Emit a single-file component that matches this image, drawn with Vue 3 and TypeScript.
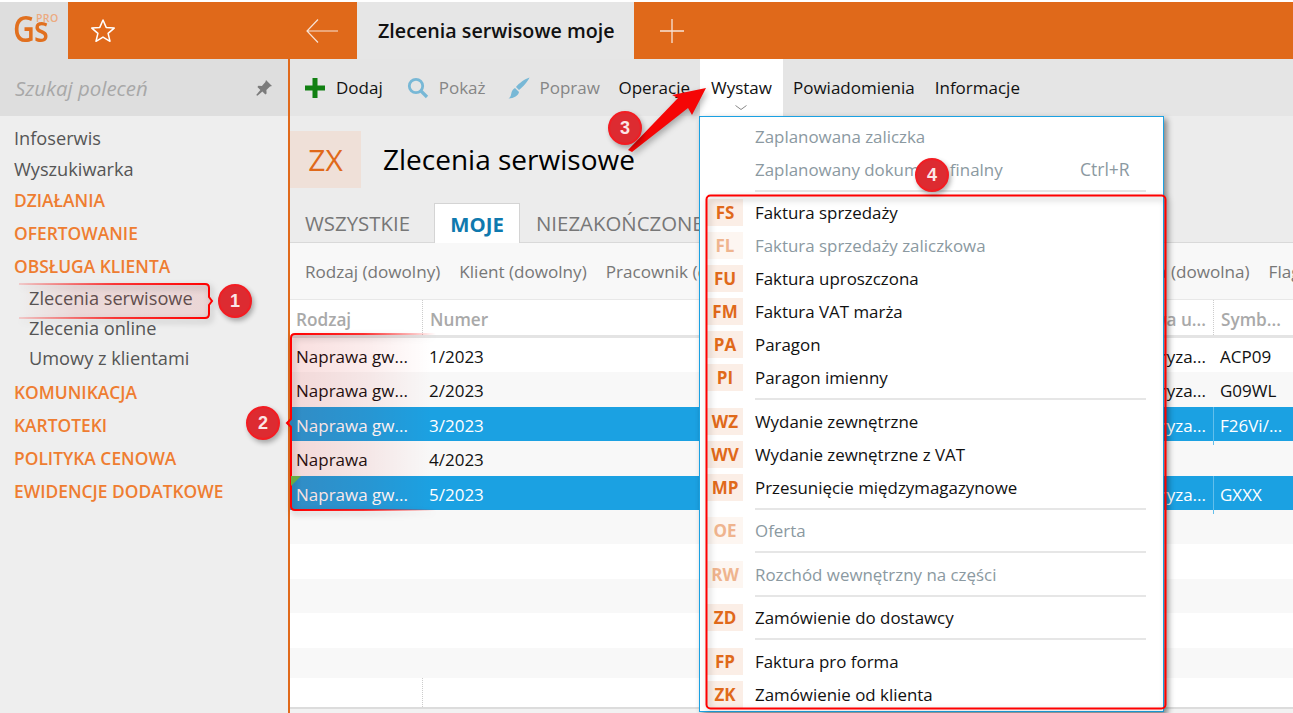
<script setup lang="ts">
interface Tool { label: string; icon?: string; muted?: boolean; active?: boolean }
interface Nav { label: string; kind: 'plain' | 'group' | 'sub'; gap?: boolean }
interface MenuRow { sep?: boolean; code?: string; label?: string; off?: boolean; key?: string }
interface Row { type?: string; num?: string; name?: string; sym?: string; sel?: boolean; cls?: string }

const tools: Tool[] = [
  { label: 'Dodaj', icon: 'plus' },
  { label: 'Pokaż', icon: 'lens', muted: true },
  { label: 'Popraw', icon: 'brush', muted: true },
  { label: 'Operacje' },
  { label: 'Wystaw', active: true },
  { label: 'Powiadomienia' },
  { label: 'Informacje' }
]
const nav: Nav[] = [
  { label: 'Infoserwis', kind: 'plain' },
  { label: 'Wyszukiwarka', kind: 'plain' },
  { label: 'DZIAŁANIA', kind: 'group' },
  { label: 'OFERTOWANIE', kind: 'group' },
  { label: 'OBSŁUGA KLIENTA', kind: 'group' },
  { label: 'Zlecenia serwisowe', kind: 'sub' },
  { label: 'Zlecenia online', kind: 'sub' },
  { label: 'Umowy z klientami', kind: 'sub' },
  { label: 'KOMUNIKACJA', kind: 'group', gap: true },
  { label: 'KARTOTEKI', kind: 'group' },
  { label: 'POLITYKA CENOWA', kind: 'group' },
  { label: 'EWIDENCJE DODATKOWE', kind: 'group' }
]
const menu: MenuRow[] = [
  { label: 'Zaplanowana zaliczka', off: true },
  { label: 'Zaplanowany dokument finalny', off: true, key: 'Ctrl+R' },
  { sep: true },
  { code: 'FS', label: 'Faktura sprzedaży' },
  { code: 'FL', label: 'Faktura sprzedaży zaliczkowa', off: true },
  { code: 'FU', label: 'Faktura uproszczona' },
  { code: 'FM', label: 'Faktura VAT marża' },
  { code: 'PA', label: 'Paragon' },
  { code: 'PI', label: 'Paragon imienny' },
  { sep: true },
  { code: 'WZ', label: 'Wydanie zewnętrzne' },
  { code: 'WV', label: 'Wydanie zewnętrzne z VAT' },
  { code: 'MP', label: 'Przesunięcie międzymagazynowe' },
  { sep: true },
  { code: 'OE', label: 'Oferta', off: true },
  { sep: true },
  { code: 'RW', label: 'Rozchód wewnętrzny na części', off: true },
  { sep: true },
  { code: 'ZD', label: 'Zamówienie do dostawcy' },
  { sep: true },
  { code: 'FP', label: 'Faktura pro forma' },
  { code: 'ZK', label: 'Zamówienie od klienta' }
]
const rows: Row[] = [
  { type: 'Naprawa gw...', num: '1/2023', name: 'Autoryza...', sym: 'ACP09' },
  { type: 'Naprawa gw...', num: '2/2023', name: 'Autoryza...', sym: 'G09WL' },
  { type: 'Naprawa gw...', num: '3/2023', name: 'Autoryza...', sym: 'F26Vi/...', sel: true },
  { type: 'Naprawa', num: '4/2023' },
  { type: 'Naprawa gw...', num: '5/2023', name: 'Autoryza...', sym: 'GXXX', sel: true },
  {}, {}, {}, {},
  { cls: 'r10' },
  { cls: 'r11' }
]
const badges = [
  { n: 1, x: 235, y: 301 },
  { n: 2, x: 263, y: 423 },
  { n: 3, x: 625, y: 128 },
  { n: 4, x: 932, y: 175 }
]
</script>

<template>
  <div class="app">
    <header class="topbar">
      <div class="logo"><span class="gs">Gs</span><span class="pro">PRO</span></div>
      <div class="orange fav">
        <svg width="26" height="26" viewBox="0 0 26 26" class="star"><path d="M13 2l3.2 7.4 8 .7-6.1 5.3 1.9 7.9L13 19.1 6 23.3l1.9-7.9L1.8 10.100l8-.7z" fill="none" stroke="#fff" stroke-width="1.500" stroke-linejoin="round"/></svg>
        <svg width="32" height="26" viewBox="0 0 32 26" class="back"><path d="M32 13H1M12 1.500L1 13l11 11.500" fill="none" stroke="#f7e3d6" stroke-width="1.200"/></svg>
      </div>
      <div class="tab-title">Zlecenia serwisowe moje</div>
      <div class="orange add">
        <svg width="24" height="24" viewBox="0 0 24 24"><path d="M12 0v24M0 12h24" stroke="#f7e3d6" stroke-width="1.300"/></svg>
      </div>
    </header>

    <div class="body">
      <aside class="side">
        <div class="search">
          <span>Szukaj poleceń</span>
          <svg width="18" height="18" viewBox="0 0 18 18"><path d="M11 1l6 6-2 .6-3.600 3.400.2 3.500-1.200 1-3-3-5 4.200L1.200 16l4.200-5-3-3 1-1.200 3.500.2L10.400 3z" fill="#7b7b7b"/></svg>
        </div>
        <nav class="nav">
          <div v-for="n in nav" :key="n.label" :class="[n.kind, { gap: n.gap }]">{{ n.label }}</div>
        </nav>
      </aside>

      <main class="main">
        <div class="toolbar">
          <div v-for="t in tools" :key="t.label" class="tool" :class="[t.icon, { muted: t.muted, active: t.active }]">
            <svg v-if="t.icon === 'plus'" width="22" height="22" viewBox="0 0 22 22"><path d="M8.500 1h5v7.500H21v5h-7.500V21h-5v-7.500H1v-5h7.500z" fill="#118012"/></svg>
            <svg v-if="t.icon === 'lens'" width="22" height="22" viewBox="0 0 22 22"><circle cx="9" cy="9" r="6.700" fill="none" stroke="#78b8d6" stroke-width="2.800"/><path d="M13.500 13.500L20 20" stroke="#78b8d6" stroke-width="3.200"/></svg>
            <svg v-if="t.icon === 'brush'" width="22" height="22" viewBox="0 0 22 22"><path d="M21.500.500C20 4 15 10 11 13L8 10C11 6 17 2 21.500.500zM7 11l4 4c-.5 3.500-5 6.500-10.500 6.500 2.500-1.500 2.500-4 3-6 .5-2 2-4 3.500-4.500z" fill="#78b8d6"/></svg>
            <span>{{ t.label }}</span>
            <svg v-if="t.active" class="chev" width="12" height="6" viewBox="0 0 12 6"><path d="M.5.500L6 4.500 11.500.500" fill="none" stroke="#888" stroke-width="1"/></svg>
          </div>
        </div>

        <div class="title-row">
          <div class="zx">ZX</div>
          <h1>Zlecenia serwisowe</h1>
        </div>

        <div class="tabs">
          <span class="tab">WSZYSTKIE</span>
          <span class="tab current">MOJE</span>
          <span class="tab">NIEZAKOŃCZONE</span>
        </div>

        <div class="filters">
          <span>Rodzaj (dowolny)</span>
          <span>Klient (dowolny)</span>
          <span>Pracownik (dowolny)</span>
          <span class="f-spacer"></span>
          <span class="f-state">Marka (dowolna)</span>
          <span>Flaga</span>
        </div>

        <div class="thead">
          <div class="c1">Rodzaj</div>
          <div class="c2">Numer</div>
          <div class="c3">Nazwa u...</div>
          <div class="c4">Symb...</div>
        </div>
        <div class="tbody">
          <div v-for="(r, i) in rows" :key="i" class="row" :class="[r.cls, { sel: r.sel, even: i % 2 === 1 }]">
            <div class="c1">{{ r.type }}</div>
            <div class="c2">{{ r.num }}</div>
            <div class="c3">{{ r.name }}</div>
            <div class="c4">{{ r.sym }}</div>
          </div>
        </div>
        <div class="tfoot"></div>
      </main>
    </div>

    <div class="menu">
      <template v-for="(m, i) in menu" :key="i">
        <div v-if="m.sep" class="sep"></div>
        <div v-else class="item" :class="{ off: m.off }">
          <span class="code" :class="{ blank: !m.code }">{{ m.code }}</span>
          <span class="lbl">{{ m.label }}</span>
          <span v-if="m.key" class="key">{{ m.key }}</span>
        </div>
      </template>
    </div>

    <svg class="marks" width="1293" height="713" viewBox="0 0 1293 713">
      <defs>
        <linearGradient id="f1" gradientUnits="userSpaceOnUse" x1="19" y1="0" x2="209" y2="0">
          <stop offset="0" stop-color="#c00" stop-opacity="0"/>
          <stop offset=".3" stop-color="#c00" stop-opacity=".09"/>
          <stop offset="1" stop-color="#c00" stop-opacity=".1"/>
        </linearGradient>
        <linearGradient id="s1" gradientUnits="userSpaceOnUse" x1="19" y1="0" x2="209" y2="0">
          <stop offset="0" stop-color="#f00" stop-opacity=".15"/>
          <stop offset=".5" stop-color="#f00" stop-opacity=".75"/>
          <stop offset="1" stop-color="#f00"/>
        </linearGradient>
        <linearGradient id="f2" gradientUnits="userSpaceOnUse" x1="291" y1="0" x2="432" y2="0">
          <stop offset="0" stop-color="#c00" stop-opacity=".13"/>
          <stop offset=".55" stop-color="#c00" stop-opacity=".07"/>
          <stop offset="1" stop-color="#c00" stop-opacity="0"/>
        </linearGradient>
        <linearGradient id="s2" gradientUnits="userSpaceOnUse" x1="291" y1="0" x2="436" y2="0">
          <stop offset="0" stop-color="#f00"/>
          <stop offset=".5" stop-color="#f00" stop-opacity=".8"/>
          <stop offset="1" stop-color="#f00" stop-opacity="0"/>
        </linearGradient>
      </defs>
      <path d="M19 284H205q4 0 4 4v9l3 4-3 4v9q0 4-4 4H19" fill="url(#f1)"/>
      <path class="shade" d="M19 284H205q4 0 4 4v9l3 4-3 4v9q0 4-4 4H19" fill="none" stroke="url(#s1)" stroke-width="2"/>
      <path d="M436 334H295q-4 0-4 4v81l-4 4 4 4v79q0 4 4 4H436" fill="url(#f2)"/>
      <path class="shade" d="M436 334H295q-4 0-4 4v81l-4 4 4 4v79q0 4 4 4H436" fill="none" stroke="url(#s2)" stroke-width="2"/>
      <path d="M291 476h10l-10 10z" fill="#6bab43"/>
      <rect class="shade" x="706.500" y="195.500" width="459" height="513" rx="4" fill="none" stroke="#f00" stroke-width="2"/>
      <path class="shade" d="M628 150l50-52-6-3 34-7-14 27-4-7-56 44z" fill="#f50606"/>
    </svg>

    <div v-for="b in badges" :key="b.n" class="badge" :style="{ left: b.x - 17 + 'px', top: b.y - 17 + 'px' }">{{ b.n }}</div>
  </div>
</template>

<style>
html, body { margin: 0; overflow: hidden; background: #fff; }
</style>

<style scoped>
.app {
  position: relative;
  width: 1293px;
  height: 713px;
  padding-top: 2px;
  box-sizing: border-box;
  overflow: hidden;
  background: #fff;
  font-family: "Open Sans", "Noto Sans", sans-serif;
  font-size: 17px;
  color: #111;
}
.topbar { display: flex; height: 57px; }
.logo { position: relative; width: 68px; background: #dedede; color: #e1701f; }
.gs { position: absolute; left: 13px; top: 5px; font-size: 36px; font-weight: 600; line-height: 44px; letter-spacing: -1px; transform: scaleX(.84); transform-origin: left center; }
.pro { position: absolute; left: 36px; top: 9px; font-size: 10.500px; line-height: 14px; letter-spacing: .4px; color: #ecaa80; font-weight: 600; }
.orange { background: #e0691a; display: flex; align-items: center; }
.fav { width: 289px; box-sizing: border-box; justify-content: space-between; padding: 0 19px 0 22px; }
.tab-title { width: 277px; background: #e6e6e6; display: flex; align-items: center; padding-left: 21px; box-sizing: border-box; font-size: 19.700px; font-weight: 600; color: #111; white-space: nowrap; }
.add { flex: 1; padding-left: 26px; }

.body { display: flex; height: 654px; }
.side { width: 290px; box-sizing: border-box; border-right: 2px solid #e0691a; background: #eee; flex: none; }
.search { height: 57px; background: #dedede; display: flex; align-items: center; justify-content: space-between; padding: 0 15px; font-style: italic; font-size: 20.400px; color: #a8a8a8; }
.nav { padding-top: 6px; color: #555; font-size: 18.200px; }
.plain { height: 31px; line-height: 32px; padding-left: 14px; }
.group { height: 33px; line-height: 33px; padding-left: 14px; color: #ee7d31; font-weight: 600; font-size: 17.400px; white-space: nowrap; }
.group.gap { margin-top: 3px; }
.sub { height: 30px; line-height: 30px; padding-left: 29px; }

.main { flex: 1; min-width: 0; background: #ececec; display: flex; flex-direction: column; }
.toolbar { height: 57px; background: #e5e5e5; display: flex; padding-left: 4px; flex: none; }
.tool { position: relative; display: flex; align-items: center; gap: 10px; padding: 0 10px; white-space: nowrap; }
.tool.lens { margin-left: 4px; }
.tool.brush { margin-left: 2px; margin-right: -1.500px; }
.tool.muted { color: #868686; }
.tool.active { background: #fff; padding: 0 11px; }
.chev { position: absolute; left: 35px; top: 46px; }

.title-row { height: 87px; flex: none; display: flex; align-items: center; box-sizing: border-box; padding-bottom: 1px; }
.zx { width: 71px; height: 57px; background: #efe0d8; color: #e0691a; font-size: 30px; display: flex; align-items: center; justify-content: center; }
h1 { margin: 0 0 0 22px; font-size: 28px; font-weight: 400; color: #000; white-space: nowrap; }

.tabs { height: 40px; flex: none; display: flex; align-items: stretch; font-size: 20.400px; color: #777; border-bottom: 1px solid #d9d9d9; box-sizing: border-box; white-space: nowrap; }
.tab { display: flex; align-items: center; padding: 0 15px; box-sizing: border-box; }
.tab.current { width: 86px; justify-content: center; background: #fff; border: 1px solid #d4d4d4; border-bottom: none; color: #0f79ae; font-weight: 700; margin-left: 9px; padding: 0; height: 40px; margin-right: 1px; }

.filters { height: 57px; flex: none; display: flex; align-items: center; gap: 19px; padding-left: 15px; background: #f8f8f8; color: #777; white-space: nowrap; overflow: hidden; font-size: 17.100px; box-sizing: border-box; border-bottom: 1px solid #e8e8e8; }
.f-spacer { width: 308px; flex: none; }

.thead, .row { display: grid; grid-template-columns: 132px 1fr 150px 80px; }
.thead { height: 38px; flex: none; box-sizing: border-box; background: #fff; border-bottom: 3px solid #e4e4e4; color: #a9a9a9; font-weight: 600; font-size: 17.200px; }
.thead .c2, .thead .c4 { border-left: 1px dotted #ccc; }
.thead div { height: 35px; line-height: 40px; }
.c1 { padding-left: 6px; white-space: nowrap; overflow: hidden; }
.c2 { padding-left: 7px; }
.c3 { padding-right: 7px; text-align: right; white-space: nowrap; overflow: hidden; }
.c4 { padding-left: 7px; white-space: nowrap; overflow: hidden; }
.tbody { flex: none; background: #fff; }
.row { height: 34.400px; line-height: 38px; color: #111; font-size: 17px; background: #fff; }
.row.even { background: #f8f8f8; }
.row.sel { background: #1ba1e2; color: #fff; }
.row.sel .c4 { border-left: 1px solid #62bfec; padding-left: 6px; }
.row.r10 { height: 30.600px; }
.row.r11 { height: 29px; }
.row.r11 .c2 { border-left: 1px dotted #ccc; }
.tfoot { flex: 1; background: #f2f2f2; border-top: 2px solid #dcdcdc; }

.menu {
  position: absolute;
  left: 699px;
  top: 116px;
  width: 465px;
  height: 596px;
  box-sizing: border-box;
  background: #fff;
  border: 1px solid #1ba1e2;
  padding-top: 2.700px;
  box-shadow: 3px 3px 6px rgba(0, 0, 0, .45);
}
.item { display: flex; align-items: center; height: 33px; position: relative; }
.code { width: 36px; height: 27px; margin-left: 7px; background: #fbeee6; color: #e0691a; font-weight: 700; font-size: 17px; line-height: 27px; text-align: center; flex: none; }
.lbl { margin-left: 12px; font-size: 16.900px; color: #111; white-space: nowrap; }
.key { position: absolute; left: 380px; color: #8b99a1; font-size: 17.500px; }
.off .lbl { color: #8b99a1; }
.off .code { color: #efb48e; background: #fdf6f1; }
.code.blank, .off .code.blank { background: none; }
.sep { height: 2px; background: #e6e6e6; margin: 4.250px 17px 4.250px 55px; }

.marks { position: absolute; left: 0; top: 0; pointer-events: none; }
.shade { filter: drop-shadow(2px 3px 3px rgba(0, 0, 0, .3)); }
.badge {
  position: absolute;
  width: 34px;
  height: 34px;
  box-sizing: border-box;
  border-radius: 50%;
  background: #dd2b31;
  border: 2px solid #f31c22;
  color: #fbe6e6;
  font-family: "Liberation Sans", sans-serif;
  font-weight: 700;
  font-size: 18px;
  line-height: 30px;
  text-align: center;
  box-shadow: 2px 3px 5px rgba(0, 0, 0, .3);
}
</style>
